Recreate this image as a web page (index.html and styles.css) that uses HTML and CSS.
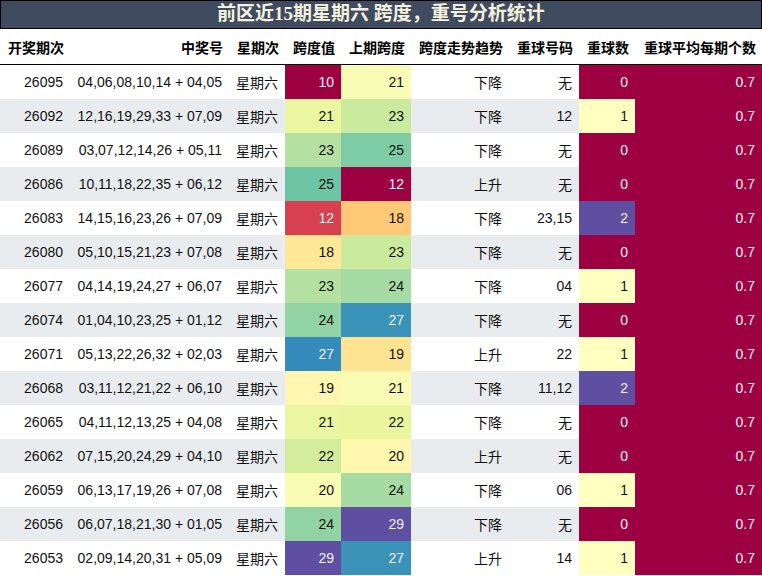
FILE: index.html
```html
<!DOCTYPE html>
<html lang="zh">
<head>
<meta charset="utf-8">
<link rel="stylesheet" href="styles.css">
</head>
<body>
<div class="title">前区近15期星期六 跨度，重号分析统计</div>
<table class="grid">
<colgroup>
<col class="c1"><col class="c2"><col class="c3"><col class="c4"><col class="c5"><col class="c6"><col class="c7"><col class="c8"><col class="c9">
</colgroup>
<thead>
<tr><th>开奖期次</th><th>中奖号</th><th>星期次</th><th>跨度值</th><th>上期跨度</th><th>跨度走势趋势</th><th>重球号码</th><th>重球数</th><th>重球平均每期个数</th></tr>
</thead>
<tbody>
<tr><td>26095</td><td>04,06,08,10,14 + 04,05</td><td>星期六</td><td class="lt" style="background:#9e0142">10</td><td style="background:#f8fcb4">21</td><td>下降</td><td>无</td><td class="lt" style="background:#9e0142">0</td><td class="lt" style="background:#9e0142">0.7</td></tr>
<tr><td>26092</td><td>12,16,19,29,33 + 07,09</td><td>星期六</td><td style="background:#ebf7a0">21</td><td style="background:#caea9e">23</td><td>下降</td><td>12</td><td style="background:#ffffbf">1</td><td class="lt" style="background:#9e0142">0.7</td></tr>
<tr><td>26089</td><td>03,07,12,14,26 + 05,11</td><td>星期六</td><td style="background:#b4e1a2">23</td><td style="background:#7ecca5">25</td><td>下降</td><td>无</td><td class="lt" style="background:#9e0142">0</td><td class="lt" style="background:#9e0142">0.7</td></tr>
<tr><td>26086</td><td>10,11,18,22,35 + 06,12</td><td>星期六</td><td style="background:#6dc5a5">25</td><td class="lt" style="background:#9e0142">12</td><td>上升</td><td>无</td><td class="lt" style="background:#9e0142">0</td><td class="lt" style="background:#9e0142">0.7</td></tr>
<tr><td>26083</td><td>14,15,16,23,26 + 07,09</td><td>星期六</td><td class="lt" style="background:#d7404e">12</td><td style="background:#fec877">18</td><td>下降</td><td>23,15</td><td class="lt" style="background:#5e4fa2">2</td><td class="lt" style="background:#9e0142">0.7</td></tr>
<tr><td>26080</td><td>05,10,15,21,23 + 07,08</td><td>星期六</td><td style="background:#fee796">18</td><td style="background:#caea9e">23</td><td>下降</td><td>无</td><td class="lt" style="background:#9e0142">0</td><td class="lt" style="background:#9e0142">0.7</td></tr>
<tr><td>26077</td><td>04,14,19,24,27 + 06,07</td><td>星期六</td><td style="background:#b4e1a2">23</td><td style="background:#a7dba4">24</td><td>下降</td><td>04</td><td style="background:#ffffbf">1</td><td class="lt" style="background:#9e0142">0.7</td></tr>
<tr><td>26074</td><td>01,04,10,23,25 + 01,12</td><td>星期六</td><td style="background:#92d3a4">24</td><td class="lt" style="background:#3b92b9">27</td><td>下降</td><td>无</td><td class="lt" style="background:#9e0142">0</td><td class="lt" style="background:#9e0142">0.7</td></tr>
<tr><td>26071</td><td>05,13,22,26,32 + 02,03</td><td>星期六</td><td class="lt" style="background:#358bbc">27</td><td style="background:#fee491">19</td><td>上升</td><td>22</td><td style="background:#ffffbf">1</td><td class="lt" style="background:#9e0142">0.7</td></tr>
<tr><td>26068</td><td>03,11,12,21,22 + 06,10</td><td>星期六</td><td style="background:#fff7b1">19</td><td style="background:#f8fcb4">21</td><td>下降</td><td>11,12</td><td class="lt" style="background:#5e4fa2">2</td><td class="lt" style="background:#9e0142">0.7</td></tr>
<tr><td>26065</td><td>04,11,12,13,25 + 04,08</td><td>星期六</td><td style="background:#ebf7a0">21</td><td style="background:#e9f69d">22</td><td>下降</td><td>无</td><td class="lt" style="background:#9e0142">0</td><td class="lt" style="background:#9e0142">0.7</td></tr>
<tr><td>26062</td><td>07,15,20,24,29 + 04,10</td><td>星期六</td><td style="background:#d3ed9c">22</td><td style="background:#fff6b0">20</td><td>上升</td><td>无</td><td class="lt" style="background:#9e0142">0</td><td class="lt" style="background:#9e0142">0.7</td></tr>
<tr><td>26059</td><td>06,13,17,19,26 + 07,08</td><td>星期六</td><td style="background:#f8fcb5">20</td><td style="background:#a7dba4">24</td><td>下降</td><td>06</td><td style="background:#ffffbf">1</td><td class="lt" style="background:#9e0142">0.7</td></tr>
<tr><td>26056</td><td>06,07,18,21,30 + 01,05</td><td>星期六</td><td style="background:#92d3a4">24</td><td class="lt" style="background:#5e4fa2">29</td><td>下降</td><td>无</td><td class="lt" style="background:#9e0142">0</td><td class="lt" style="background:#9e0142">0.7</td></tr>
<tr><td>26053</td><td>02,09,14,20,31 + 05,09</td><td>星期六</td><td class="lt" style="background:#5e4fa2">29</td><td class="lt" style="background:#3b92b9">27</td><td>上升</td><td>14</td><td style="background:#ffffbf">1</td><td class="lt" style="background:#9e0142">0.7</td></tr>
</tbody>
</table>
</body>
</html>
```
FILE: styles.css
```css
html, body {
  margin: 0;
  padding: 0;
  background: #ffffff;
}
body {
  width: 762px;
  font-family: "Liberation Sans", "Noto Sans CJK SC", sans-serif;
  color: #111111;
}
.title {
  box-sizing: border-box;
  height: 29px;
  border: 1px solid #000000;
  background: #3f4c60;
  color: #f6f1de;
  font-family: "Liberation Serif", "Noto Sans CJK SC", serif;
  font-weight: bold;
  font-size: 19px;
  line-height: 26px;
  text-align: center;
}
.grid {
  width: 762px;
  border-collapse: collapse;
  table-layout: fixed;
  font-size: 14px;
}
.c1 { width: 70px; }
.c2 { width: 159px; }
.c3 { width: 56px; }
.c4 { width: 56px; }
.c5 { width: 70px; }
.c6 { width: 98px; }
.c7 { width: 70px; }
.c8 { width: 56px; }
.c9 { width: 127px; }
.grid th {
  height: 35px;
  padding: 0 6px 0 0;
  text-align: right;
  font-weight: bold;
  font-family: "Noto Sans CJK SC", sans-serif;
  font-size: 14px;
  color: #000000;
  border-bottom: 1px solid #000000;
  white-space: nowrap;
}
.grid th:first-child {
  text-align: left;
  padding-left: 8px;
}
.grid td {
  height: 34px;
  padding: 0 7px 0 0;
  text-align: right;
  white-space: nowrap;
}
.grid tbody tr:nth-child(even) {
  background: #e9ecef;
}
.grid td.lt {
  color: #f1f1f1;
}
```
